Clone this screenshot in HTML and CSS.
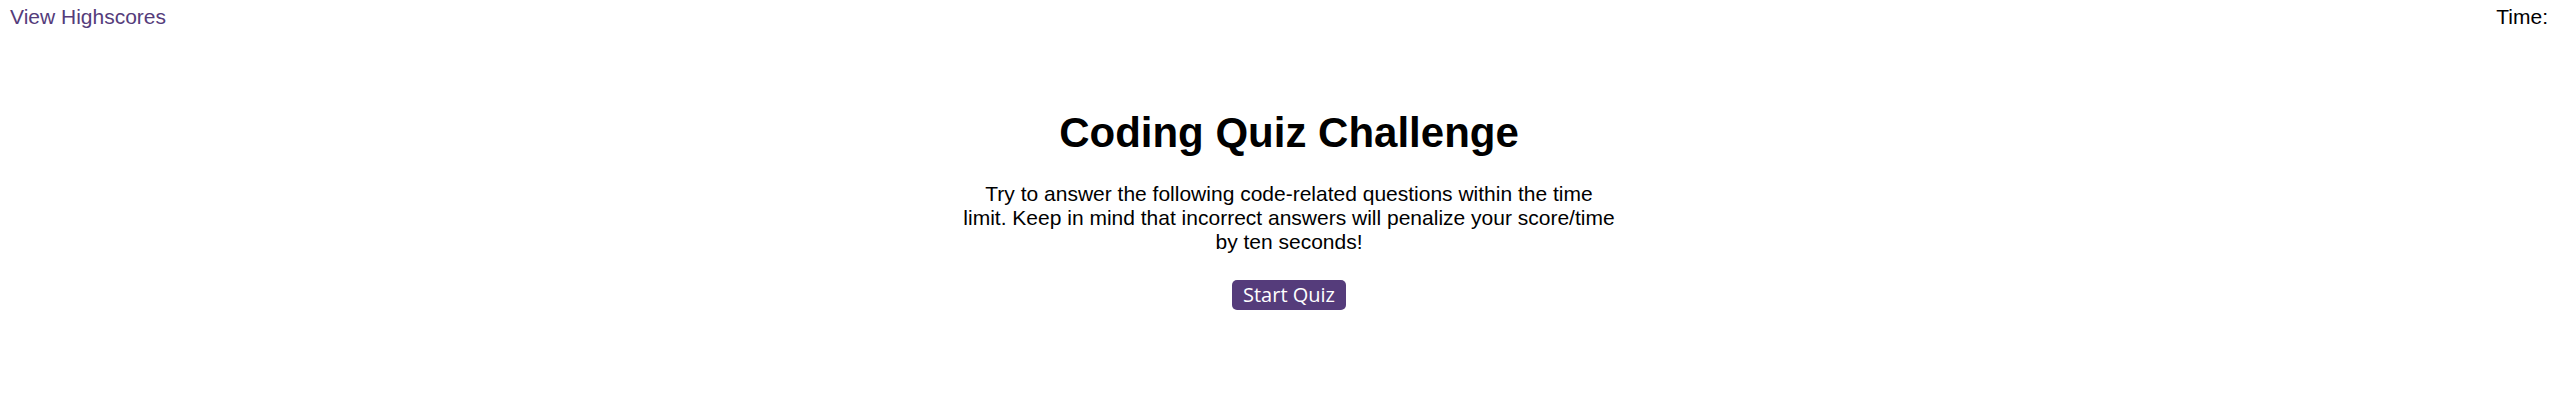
FILE: index.html
```html
<!DOCTYPE html>
<html lang="en">
<head>
<meta charset="utf-8">
<title>Coding Quiz Challenge</title>
<link rel="stylesheet" href="styles.css">
</head>
<body>
<header class="top-bar">
  <a class="highscores-link" href="#">View Highscores</a>
  <div class="timer">Time: <span class="timer-value"></span></div>
</header>
<main class="quiz">
  <h1 class="quiz-title">Coding Quiz Challenge</h1>
  <p class="quiz-intro">Try to answer the following code-related questions within the time limit. Keep in mind that incorrect answers will penalize your score/time by ten seconds!</p>
  <button class="start-button" type="button">Start Quiz</button>
</main>
</body>
</html>
```
FILE: styles.css
```css
html, body {
  margin: 0;
  padding: 0;
  background: #ffffff;
}

body {
  font-family: "Liberation Sans", Arial, sans-serif;
  color: #000000;
}

.top-bar {
  display: flex;
  justify-content: space-between;
  align-items: flex-start;
  padding: 5px 10px 0 10px;
  font-size: 21px;
}

.highscores-link {
  color: #553c7b;
  text-decoration: none;
}

.timer {
  color: #000000;
}

.quiz {
  display: flex;
  flex-direction: column;
  align-items: center;
  padding-left: 20px;
  margin-top: 80px;
}

.quiz-title {
  margin: 0;
  font-size: 42px;
  font-weight: bold;
  line-height: 48px;
}

.quiz-intro {
  margin: 25px 0 0 0;
  max-width: 653px;
  text-align: center;
  font-size: 21px;
  line-height: 24px;
}

.start-button {
  margin-top: 26px;
  padding: 2px 11px;
  border: none;
  border-radius: 5px;
  background: #553c7b;
  color: #ffffff;
  font-family: "Open Sans", "Noto Sans", sans-serif;
  font-size: 20px;
  line-height: 26px;
  cursor: pointer;
}
```
